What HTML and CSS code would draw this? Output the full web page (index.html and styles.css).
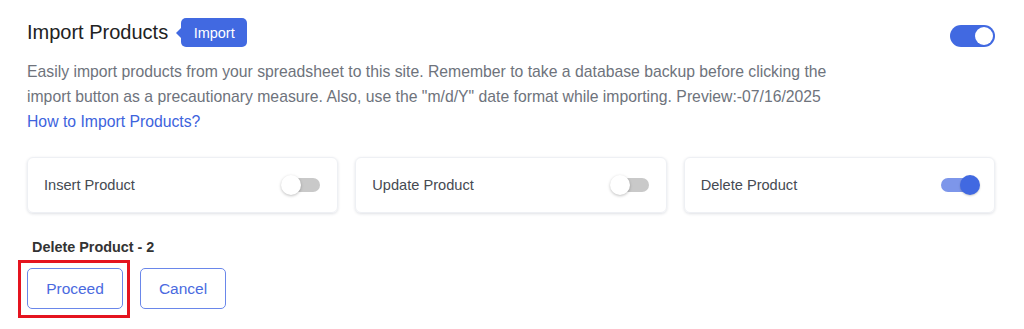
FILE: index.html
```html
<!DOCTYPE html>
<html lang="en">
<head>
<meta charset="utf-8">
<title>Import Products</title>
<link rel="stylesheet" href="styles.css">
</head>
<body>
<div class="panel">
  <div class="header">
    <div class="title-group">
      <h1 class="title">Import Products</h1>
      <span class="badge">Import</span>
    </div>
    <span class="main-switch"><span class="main-knob"></span></span>
  </div>
  <p class="desc">Easily import products from your spreadsheet to this site. Remember to take a database backup before clicking the import button as a precautionary measure. Also, use the "m/d/Y" date format while importing. Preview:-07/16/2025<br><a class="link" href="#">How to Import Products?</a></p>
  <div class="cards">
    <div class="card"><span class="card-label">Insert Product</span><span class="sw"><span class="sw-knob"></span></span></div>
    <div class="card"><span class="card-label">Update Product</span><span class="sw"><span class="sw-knob"></span></span></div>
    <div class="card"><span class="card-label">Delete Product</span><span class="sw on"><span class="sw-knob"></span></span></div>
  </div>
  <div class="status">Delete Product - 2</div>
  <div class="actions">
    <span class="highlight"><button class="btn proceed">Proceed</button></span>
    <button class="btn cancel">Cancel</button>
  </div>
</div>
</body>
</html>
```
FILE: styles.css
```css
* { box-sizing: border-box; }
html, body { margin: 0; background: #fff; }
body { font-family: "Liberation Sans", Arial, sans-serif; min-height: 329px; }
.panel { padding: 18px 29px 20px 27px; }
.header { display: flex; justify-content: space-between; align-items: center; height: 29px; }
.title-group { display: flex; align-items: center; }
.title { margin: 0; font-size: 20px; font-weight: 400; color: #222; line-height: 29px; }
.badge {
  position: relative; margin-left: 13px; height: 29px; width: 66px;
  background: #4169e1; color: #fff; font-size: 14.5px; border-radius: 5px;
  display: flex; align-items: center; justify-content: center;
}
.badge::before {
  content: ""; position: absolute; left: -5px; top: 50%; margin-top: -5px;
  border-style: solid; border-width: 5px 5px 5px 0; border-color: transparent #4169e1 transparent transparent;
}
.main-switch {
  width: 45px; height: 22px; border-radius: 11px; background: #4169e1;
  display: flex; align-items: center; justify-content: flex-end; padding: 2px; margin-top: 6px;
}
.main-knob { width: 18px; height: 18px; border-radius: 50%; background: #fff; }
.desc { margin: 12px 0 0; font-size: 15.75px; line-height: 25px; color: #6e737c; max-width: 840px; }
.link { color: #3d63dd; text-decoration: none; }
.cards { display: grid; grid-template-columns: repeat(3, 1fr); gap: 17px; margin-top: 23px; }
.card {
  height: 56px; border: 1px solid #eef0f4; border-radius: 6px;
  box-shadow: 0 1px 3px rgba(30, 40, 70, 0.14);
  display: flex; align-items: center; justify-content: space-between; padding: 0 17px 0 16px;
}
.card-label { font-size: 14.6px; color: #454a52; }
.sw { position: relative; width: 38px; height: 14px; border-radius: 7px; background: #c9c9c9; }
.sw-knob {
  position: absolute; top: -3px; left: -1px; width: 20px; height: 20px; border-radius: 50%;
  background: #fff; box-shadow: 0 1px 3px rgba(0, 0, 0, 0.25);
}
.sw.on { background: #7d96ea; width: 36px; }
.sw.on .sw-knob { left: auto; right: -3px; background: #4169e1; box-shadow: 0 1px 2px rgba(0, 0, 0, 0.2); }
.status { margin-top: 25px; margin-left: 5px; font-size: 14.4px; font-weight: 700; color: #333; line-height: 18px; }
.actions { display: flex; gap: 17px; margin-top: 12px; }
.highlight { position: relative; display: flex; }
.highlight::after {
  content: ""; position: absolute; top: -8px; left: -9px; right: -7px; bottom: -9px;
  border: 3px solid #e5141f; pointer-events: none;
}
.btn {
  height: 41px; padding: 0; background: #fff; border: 1px solid #6a87ea; border-radius: 5px;
  color: #4a6ae0; font-family: "Liberation Sans", Arial, sans-serif; font-size: 15.5px;
}
.proceed { width: 96px; }
.cancel { width: 86px; }
```
